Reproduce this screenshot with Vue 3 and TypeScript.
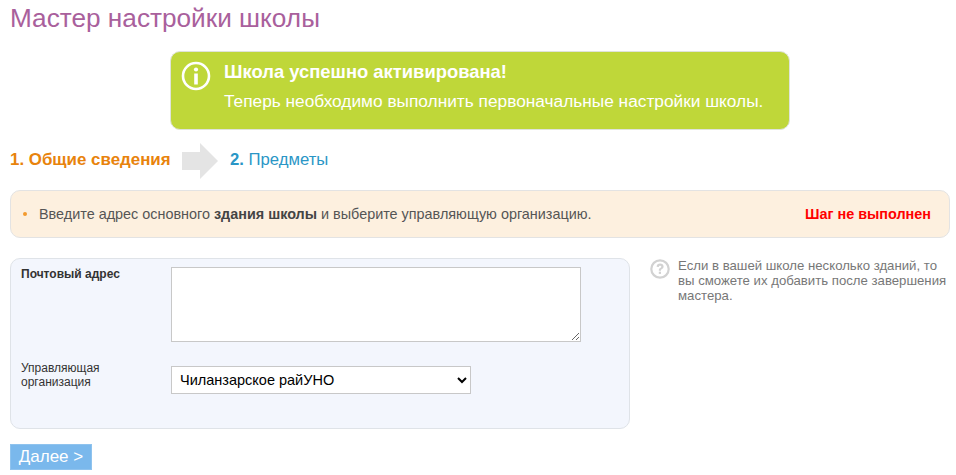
<script setup lang="ts">
const org: string = 'Чиланзарское райУНО'
</script>

<template>
  <div class="page">
    <h1 class="title">Мастер настройки школы</h1>
    <div class="success">
      <svg class="info" width="32" height="32" viewBox="0 0 32 32">
        <circle cx="16" cy="16" r="13" fill="none" stroke="#fff" stroke-width="2.6" />
        <circle cx="16" cy="9.5" r="2.1" fill="#fff" />
        <rect x="14.2" y="13.5" width="3.6" height="11" fill="#fff" />
      </svg>
      <div class="success-text">
        <div class="success-head">Школа успешно активирована!</div>
        <div class="success-sub">Теперь необходимо выполнить первоначальные настройки школы.</div>
      </div>
    </div>
    <div class="steps">
      <span class="step-one">1. Общие сведения</span>
      <svg class="arrow" width="36" height="36" viewBox="0 0 36 36">
        <path d="M0 9H18V0L36 18L18 36V27H0Z" fill="#e4e4e4" />
      </svg>
      <span class="step-two"><b>2.</b> Предметы</span>
    </div>
    <div class="notice">
      <span class="bullet"></span>
      <span class="notice-text">Введите адрес основного <b>здания школы</b> и выберите управляющую организацию.</span>
      <span class="status">Шаг не выполнен</span>
    </div>
    <div class="columns">
      <form class="form" @submit.prevent>
        <div class="row row-address">
          <label class="label strong">Почтовый адрес</label>
          <textarea class="address"></textarea>
        </div>
        <div class="row">
          <label class="label label-org">Управляющая организация</label>
          <select class="select"><option>{{ org }}</option></select>
        </div>
      </form>
      <div class="hint">
        <svg class="help" width="20" height="20" viewBox="0 0 20 20">
          <circle cx="10" cy="10" r="8.7" fill="none" stroke="#d2d2d2" stroke-width="2.2" />
          <path d="M6.6 7.700C6.700 5.700 8.100 4.600 10.100 4.600C12.200 4.600 13.600 5.800 13.600 7.500C13.600 9 12.700 9.700 11.700 10.300C11.100 10.700 11 11 11 11.800H8.800C8.800 10.400 9.100 9.700 10.100 9.100C10.900 8.600 11.300 8.300 11.300 7.700C11.300 7.100 10.800 6.700 10.100 6.700C9.300 6.700 8.900 7.200 8.800 8Z" fill="#d2d2d2" />
          <rect x="8.800" y="12.700" width="2.200" height="2.200" fill="#d2d2d2" />
        </svg>
        <p class="hint-text">Если в вашей школе несколько зданий, то вы сможете их добавить после завершения мастера.</p>
      </div>
    </div>
    <button class="next" type="button">Далее &gt;</button>
  </div>
</template>

<style>
html, body { margin: 0; background: #fff; }
</style>

<style scoped>
.page {
  box-sizing: border-box;
  width: 956px;
  height: 475px;
  padding: 0 6px 0 10px;
  overflow: hidden;
  font-family: "Liberation Sans", Arial, sans-serif;
}
.title {
  margin: 0;
  height: 51px;
  padding-top: 3px;
  box-sizing: border-box;
  font-size: 26.2px;
  line-height: 30px;
  font-weight: normal;
  color: #a9609c;
}
.success {
  box-sizing: border-box;
  display: flex;
  width: 620px;
  height: 79px;
  margin-left: 160px;
  padding: 8px 0 0 9px;
  gap: 12px;
  background: #bfd739;
  border: 1px solid #dfe3da;
  border-radius: 10px;
  color: #fff;
}
.info { flex: none; }
.success-text { padding-top: 1px; }
.success-head { font-size: 18.400px; line-height: 22px; font-weight: bold; }
.success-sub { margin-top: 7px; font-size: 17.300px; line-height: 22px; }
.steps {
  display: flex;
  align-items: center;
  height: 36px;
  margin-top: 13px;
  font-size: 16.700px;
}
.step-one { width: 172px; margin-top: -2px; font-size: 16.900px; font-weight: bold; color: #e8830c; white-space: nowrap; }
.arrow { flex: none; }
.step-two { margin-left: 12px; margin-top: -2px; color: #2a96c6; }
.notice {
  box-sizing: border-box;
  display: flex;
  align-items: center;
  height: 48px;
  margin-top: 11px;
  padding: 0 18px 0 12px;
  background: #fdf0df;
  border: 1px solid #e3e3e3;
  border-radius: 10px;
  font-size: 14.400px;
  color: #555;
}
.bullet {
  width: 4px;
  height: 4px;
  margin-right: 12px;
  border-radius: 50%;
  background: #f39a2e;
}
.notice-text b { color: #444; }
.status { margin-left: auto; font-size: 14.400px; font-weight: bold; color: #f00; }
.columns { display: flex; margin-top: 20px; }
.form {
  box-sizing: border-box;
  flex: none;
  width: 620px;
  height: 171px;
  padding: 8px 10px 0;
  background: #f3f6fd;
  border: 1px solid #dfe3e8;
  border-radius: 10px;
}
.row { display: flex; align-items: flex-start; }
.row-address { height: 99px; }
.label {
  width: 150px;
  flex: none;
  font-size: 12px;
  line-height: 14px;
  color: #333;
}
.label-org { margin-top: -5px; padding-right: 60px; box-sizing: border-box; }
.strong { font-weight: bold; }
.address {
  box-sizing: border-box;
  width: 410px;
  height: 75px;
  margin: 0;
  background: #fff;
  border: 1px solid #c8c8c8;
  border-radius: 0;
  outline: none;
}
.select {
  box-sizing: border-box;
  width: 300px;
  height: 28px;
  padding: 0 0 0 4px;
  background: #fff;
  border: 1px solid #c8c8c8;
  border-radius: 0;
  font-family: "Liberation Sans", Arial, sans-serif;
  font-size: 14.500px;
  color: #000;
}
.hint { display: flex; margin-left: 20px; }
.help { flex: none; margin-top: 1px; }
.hint-text {
  width: 276px;
  margin: 0 0 0 8px;
  font-size: 13.200px;
  line-height: 15px;
  color: #777;
}
.next {
  display: block;
  box-sizing: border-box;
  width: 82px;
  height: 26px;
  margin-top: 15px;
  padding: 0 0 1px;
  background: #7ab8ec;
  border: 1px solid #8fc3ee;
  border-radius: 0;
  color: #fff;
  font-family: "Liberation Sans", Arial, sans-serif;
  font-size: 17px;
  text-align: center;
}
</style>
